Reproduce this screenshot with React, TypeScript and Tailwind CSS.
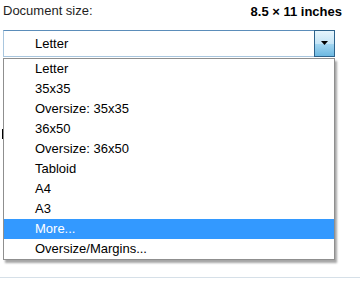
const sizes = [
  "Letter",
  "35x35",
  "Oversize: 35x35",
  "36x50",
  "Oversize: 36x50",
  "Tabloid",
  "A4",
  "A3",
  "More...",
  "Oversize/Margins...",
];

const selected = "More...";

const App = () => {
  return (
    <div className="w-[360px] h-[293px] bg-white overflow-hidden text-[13px] text-black font-['Liberation_Sans',Arial,sans-serif]">
      {/* Header row */}
      <div className="flex justify-between items-start pt-[3px] pl-[3px] w-[342px] leading-4">
        <span className="text-[#1e1e1e]">Document size:</span>
        <span className="font-bold pt-[1px]">8.5 × 11 inches</span>
      </div>

      {/* Combo box with open list */}
      <div className="relative ml-[3px] mt-[10px] w-[332px]">
        <div className="flex h-[27px] border border-[#a9c6de] border-t-[#5b8dba] bg-white">
          <div className="flex-1 pl-[31px] leading-[25px]">Letter</div>
          <div className="w-[21px] -my-px -mr-px flex flex-col border border-[#2c628b]">
            <div className="flex-1 bg-gradient-to-b from-[#e6f5fc] to-[#c3e4f6]" />
            <div className="flex-1 bg-gradient-to-b from-[#a2d6f1] to-[#6cb8e0]" />
          </div>
          <svg className="absolute right-[6px] top-[11px]" width="8" height="5" viewBox="0 0 8 5">
            <path d="M0 0h7L3.5 4z" fill="#000" />
          </svg>
        </div>

        <ul className="absolute left-0 top-[28px] w-[332px] border border-[#8f8f8f] bg-white shadow-[2px_3px_2px_rgba(0,0,0,0.35)] z-10">
          {sizes.map((s) => (
            <li
              key={s}
              className={
                s === selected
                  ? "h-5 leading-5 pl-[31px] bg-[#3399ff] text-white"
                  : "h-5 leading-5 pl-[31px]"
              }
            >
              {s}
            </li>
          ))}
        </ul>
      </div>

      {/* Content hidden under the list */}
      <div className="h-[220px] pt-[72px] pl-[2px]">
        <div className="w-px h-[10px] bg-black" />
      </div>

      <div className="border-t border-[#d6e0e8]" />
    </div>
  );
};

export default App;
